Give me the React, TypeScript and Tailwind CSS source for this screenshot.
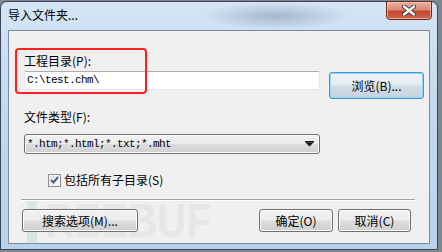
import React from "react";

const btn =
  "flex items-center justify-center h-[23px] rounded-[3px] border border-[#707070] shadow-[inset_0_0_0_1px_#fbfbfb] bg-[linear-gradient(to_bottom,#f2f2f2_0%,#ebebeb_48%,#dddddd_52%,#cfcfcf_100%)] text-[12px] leading-none text-black";

function CloseX() {
  return (
    <svg width="14" height="11" viewBox="0 0 14 11">
      <path d="M2 1.5 L12 9.5 M12 1.5 L2 9.5" stroke="#3b3b3b" strokeWidth="4.2" strokeLinecap="round" />
      <path d="M2 1.5 L12 9.5 M12 1.5 L2 9.5" stroke="#ffffff" strokeWidth="2.4" strokeLinecap="round" />
    </svg>
  );
}

export default function App() {
  return (
    <div className="w-[442px] h-[252px] bg-[#80868d] overflow-hidden font-['Noto_Sans_CJK_SC',sans-serif]">
      <div className="relative w-[438px] h-[249px] mt-[1px] rounded-t-[7px] border border-[#3a4657] bg-[linear-gradient(to_bottom,#d4e5f5_0%,#c3daf0_40%,#b9d2ec_100%)] flex flex-col">
        {/* glass blur decoration */}
        <div className="absolute left-[200px] top-0 w-[150px] h-[28px] bg-[radial-gradient(ellipse_at_center,rgba(110,130,155,0.45)_0%,rgba(110,130,155,0)_70%)]" />
        {/* title bar */}
        <div className="relative h-[28px] flex items-start">
          <span className="ml-[7px] mt-[5px] text-[12px] leading-[16px] text-black">导入文件夹...</span>
          <div className="absolute right-[5px] -top-[1px] w-[46px] h-[19px] rounded-b-[4px] border border-[#6e2a1f] shadow-[inset_0_0_0_1px_rgba(255,210,200,0.6)] bg-[linear-gradient(to_bottom,#eab0a3_0%,#dc8a77_45%,#c4482f_55%,#d0664c_100%)] flex items-center justify-center">
            <CloseX />
          </div>
        </div>
        {/* client */}
        <div className="relative mx-[7px] h-[214px] border border-[#7c8a9c] bg-[#f0f0f0] flex flex-col">
          {/* watermark */}
          <div className="absolute left-[18px] top-[168px] flex items-end select-none">
            <div className="w-[10px] h-[44px] bg-[#d6e8de] mr-[8px]" />
            <span className="origin-left scale-x-[0.84] font-['Liberation_Sans',sans-serif] font-bold text-[48px] leading-[44px] text-[#e6e6e6]">REEBUF</span>
          </div>

          {/* row 1 */}
          <div className="relative flex items-start mt-[22px] ml-[15px]">
            <div className="flex flex-col w-[296px]">
              <span className="text-[12px] leading-[16px] text-black">工程目录(P):</span>
              <div className="mt-[2px] h-[19px] bg-white border border-[#e2e8ee] border-t-[#abadb3] rounded-[2px] flex items-center pl-[2px]">
                <span className="font-['Liberation_Mono',monospace] text-[11px] tracking-[-0.6px] text-black">C:\test.chm\</span>
              </div>
            </div>
            <div className="ml-[9px] mt-[19px] w-[95px] h-[27px] rounded-[3px] border border-[#3c97d6] shadow-[inset_0_0_0_1px_#9ad6f6] bg-[linear-gradient(to_bottom,#eef3f8_0%,#e2eaf1_48%,#d0dde7_52%,#c4d4e0_100%)] flex items-center justify-center text-[12px] leading-none text-black">
              浏览(B)...
            </div>
          </div>

          {/* row 2 */}
          <span className="relative mt-[10px] ml-[15px] text-[12px] leading-[16px] text-black">文件类型(F):</span>
          <div className="relative mt-[9px] ml-[15px] w-[296px] h-[20px] rounded-[3px] border border-[#707070] shadow-[inset_0_0_0_1px_#fbfbfb] bg-[linear-gradient(to_bottom,#f2f2f2_0%,#ebebeb_48%,#dddddd_52%,#cfcfcf_100%)] flex items-center pl-[2px] pr-[5px]">
            <span className="flex-1 font-['Liberation_Mono',monospace] text-[11px] tracking-[-0.6px] text-black">*.htm;*.html;*.txt;*.mht</span>
            <svg width="9" height="6" viewBox="0 0 9 6">
              <rect x="0" y="0" width="9" height="1.5" fill="#111" />
              <polygon points="0.5,1.5 8.5,1.5 4.5,5.5" fill="#111" />
            </svg>
          </div>

          {/* checkbox */}
          <div className="relative mt-[18px] ml-[39px] flex items-center h-[16px]">
            <div className="w-[13px] h-[13px] border border-[#8e8f8f] bg-[linear-gradient(135deg,#dcdcdc,#ffffff)] shadow-[inset_0_0_0_1px_#f4f4f4] flex items-center justify-center">
              <svg width="9" height="8" viewBox="0 0 9 8">
                <path d="M1 4 L3.5 6.5 L8 1" stroke="#4a5f97" strokeWidth="2" fill="none" />
              </svg>
            </div>
            <span className="ml-[3px] text-[12px] leading-[16px] text-black">包括所有子目录(S)</span>
          </div>

          {/* separator */}
          <div className="relative mt-[11px] ml-[12px] w-[394px] h-[1px] bg-[#a0a0a0] shadow-[0_1px_0_#ffffff]" />

          {/* buttons */}
          <div className="relative mt-[9px] ml-[13px] flex">
            <div className={btn + " w-[116px]"}>搜索选项(M)...</div>
            <div className={btn + " w-[74px] ml-[121px]"}>确定(O)</div>
            <div className={btn + " w-[73px] ml-[5px]"}>取消(C)</div>
          </div>

          {/* red annotation box */}
          <div className="absolute left-[6px] top-[17px] w-[132px] h-[46px] border-2 border-[#ff1f1f] rounded-[4px]" />
        </div>
      </div>
    </div>
  );
}
